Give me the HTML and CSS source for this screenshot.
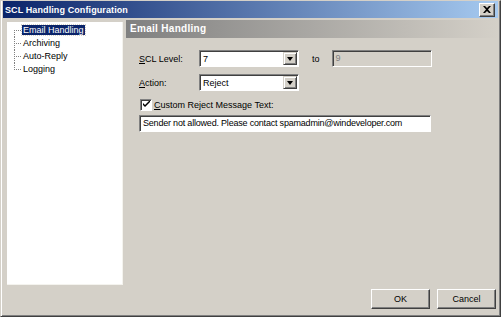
FILE: index.html
```html
<!DOCTYPE html>
<html>

<head>
    <link rel="stylesheet" href="styles.css">
</head>

<body>
    <div class="window">
        <!-- Title bar -->
        <div class="title-bar">
            <span class="title-text">SCL Handling Configuration</span>
            <button class="close-button">
                <svg width="8" height="7" viewBox="0 0 8 7">
                    <path d="M0 0h2l2 2 2-2h2L5 3.5 8 7H6L4 5 2 7H0l3-3.5z" fill="#000" />
                </svg>
            </button>
        </div>

        <div class="main">
            <!-- Tree of pages -->
            <div class="tree">
                <div class="tree-item selected"><span class="tree-label">Email Handling</span></div>
                <div class="tree-item"><span class="tree-label">Archiving</span></div>
                <div class="tree-item"><span class="tree-label">Auto-Reply</span></div>
                <div class="tree-item last"><span class="tree-label">Logging</span></div>
            </div>

            <!-- Page content -->
            <div class="page">
                <div class="page-header">Email Handling</div>
                <div class="form">
                    <div class="form-row">
                        <label class="form-label"><u>S</u>CL Level:</label>
                        <div class="combo">
                            <span class="combo-value">7</span>
                            <span class="combo-arrow"></span>
                        </div>
                        <span class="to-label">to</span>
                        <div class="textbox disabled">9</div>
                    </div>
                    <div class="form-row">
                        <label class="form-label"><u>A</u>ction:</label>
                        <div class="combo">
                            <span class="combo-value">Reject</span>
                            <span class="combo-arrow"></span>
                        </div>
                    </div>
                    <div class="check-row">
                        <span class="checkbox">
                            <svg width="7" height="7" viewBox="0 0 7 7">
                                <path d="M0 2l2 2 5-5v2L2 6 0 4z" fill="#000" />
                            </svg>
                        </span>
                        <span><u>C</u>ustom Reject Message Text:</span>
                    </div>
                    <div class="textbox wide">Sender not allowed. Please contact spamadmin@windeveloper.com</div>
                </div>
            </div>
        </div>

        <!-- Dialog buttons -->
        <div class="footer">
            <button class="dialog-button">OK</button>
            <button class="dialog-button">Cancel</button>
        </div>
    </div>
</body>

</html>
```

FILE: styles.css
```css
/* Classic Windows dialog look */
body {
    margin: 0;
    font-family: Tahoma, "Liberation Sans", Arial, sans-serif;
    font-size: 9px;
    color: #000;
}

.window {
    width: 501px;
    height: 317px;
    box-sizing: border-box;
    background-color: #d4d0c8;
    border: 1px solid;
    border-color: #d4d0c8 #404040 #404040 #d4d0c8;
    box-shadow: inset 1px 0 0 #fff, inset -1px -1px 0 #808080;
    padding: 0 2px 2px 2px;
    display: flex;
    flex-direction: column;
}

.title-bar {
    height: 17px;
    display: flex;
    align-items: center;
    justify-content: space-between;
    padding: 0 3px 0 2px;
    background: linear-gradient(to right, #0a246a, #a6caf0);
    color: #fff;
    font-weight: bold;
}

.title-text {
    font-size: 9px;
    letter-spacing: 0.1px;
}

.close-button {
    width: 16px;
    height: 14px;
    padding: 0;
    display: flex;
    align-items: center;
    justify-content: center;
    background-color: #d4d0c8;
    border: 1px solid;
    border-color: #fff #404040 #404040 #fff;
    box-shadow: inset -1px -1px 0 #808080;
}

.main {
    display: flex;
    margin-top: 2px;
}

/* Tree on the left */
.tree {
    width: 116px;
    height: 263px;
    margin: 2px 0 0 4px;
    background-color: #fff;
    border-right: 1px solid #f4f3ee;
    border-bottom: 1px solid #f4f3ee;
    padding-top: 2px;
    box-sizing: border-box;
}

.tree-item {
    position: relative;
    height: 13px;
    line-height: 13px;
    padding-left: 15px;
}

.tree-item::before {
    content: "";
    position: absolute;
    left: 7px;
    top: 6px;
    width: 7px;
    border-top: 1px dotted #808080;
}

.tree-item::after {
    content: "";
    position: absolute;
    left: 7px;
    top: 0;
    height: 13px;
    border-left: 1px dotted #808080;
}

.tree-item:first-child::after {
    top: 6px;
    height: 7px;
}

.tree-item.last::after {
    height: 7px;
}

.tree-label {
    padding: 0 1px;
}

.selected .tree-label {
    background-color: #0a246a;
    color: #fff;
    outline: 1px dotted #d4d0c8;
}

/* Right-hand page */
.page {
    flex: 1;
    margin-left: 3px;
}

.page-header {
    height: 18px;
    line-height: 18px;
    padding-left: 4px;
    background: linear-gradient(to right, #808080, #d4d0c8);
    color: #fff;
    font-weight: bold;
    font-size: 10px;
    letter-spacing: 0.3px;
}

.form {
    padding: 12px 0 0 13px;
}

.form-row {
    display: flex;
    align-items: center;
    height: 17px;
    margin-bottom: 7px;
}

.form-label {
    width: 60px;
}

.combo {
    width: 100px;
    height: 17px;
    box-sizing: border-box;
    display: flex;
    align-items: center;
    background-color: #fff;
    border: 1px solid;
    border-color: #808080 #fff #fff #808080;
    box-shadow: inset 1px 1px 0 #404040;
}

.combo-value {
    flex: 1;
    padding-left: 3px;
}

.combo-arrow {
    width: 14px;
    height: 13px;
    margin-right: 1px;
    box-sizing: border-box;
    background-color: #d4d0c8;
    border: 1px solid;
    border-color: #d4d0c8 #404040 #404040 #d4d0c8;
    box-shadow: inset 1px 1px 0 #fff, inset -1px -1px 0 #808080;
    display: flex;
    align-items: center;
    justify-content: center;
}

.combo-arrow::after {
    content: "";
    border-left: 3.5px solid transparent;
    border-right: 3.5px solid transparent;
    border-top: 4px solid #000;
}

.to-label {
    margin: 0 12px 0 13px;
}

.textbox {
    height: 17px;
    box-sizing: border-box;
    line-height: 15px;
    padding-left: 3px;
    white-space: nowrap;
    overflow: hidden;
    background-color: #fff;
    border: 1px solid;
    border-color: #808080 #fff #fff #808080;
    box-shadow: inset 1px 1px 0 #404040;
}

.textbox.disabled {
    width: 100px;
    background-color: #d4d0c8;
    color: #808080;
}

.textbox.wide {
    width: 292px;
    letter-spacing: -0.2px;
}

.check-row {
    display: flex;
    align-items: center;
    height: 13px;
    margin: 2px 0 4px 1px;
}

.checkbox {
    width: 12px;
    height: 12px;
    box-sizing: border-box;
    margin-right: 2px;
    background-color: #fff;
    border: 1px solid;
    border-color: #808080 #fff #fff #808080;
    box-shadow: inset 1px 1px 0 #404040;
    display: flex;
    align-items: center;
    justify-content: center;
}

/* Dialog buttons */
.footer {
    margin-top: auto;
    display: flex;
    justify-content: flex-end;
    gap: 7px;
    padding: 0 2px 5px 0;
}

.dialog-button {
    width: 59px;
    height: 20px;
    font-family: inherit;
    font-size: 9px;
    color: #000;
    background-color: #d4d0c8;
    border: 1px solid;
    border-color: #fff #404040 #404040 #fff;
    box-shadow: inset -1px -1px 0 #808080;
}
```
